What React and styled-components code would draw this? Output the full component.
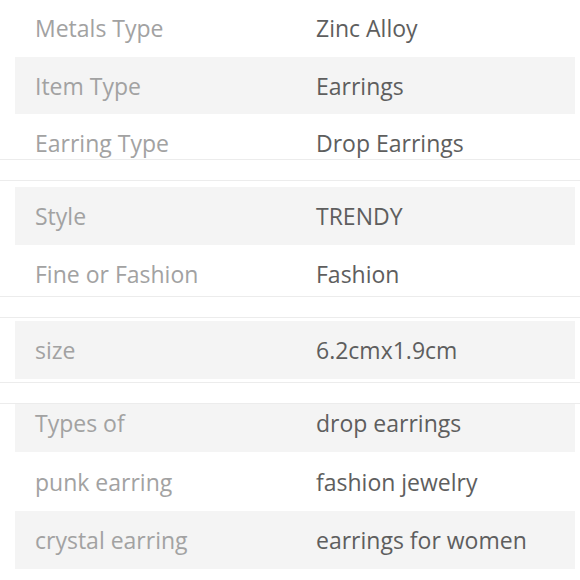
import React from 'react';
import styled, { createGlobalStyle } from 'styled-components';

const GlobalStyle = createGlobalStyle`
	html, body {
		margin: 0;
		padding: 0;
		background: #fff;
	}
	body {
		font-family: 'Open Sans', 'Noto Sans', sans-serif;
	}
`;

const sections = [
	{
		top: 0,
		bottom: 0,
		borderTop: false,
		rows: [
			{ label: 'Metals Type', value: 'Zinc Alloy', h: 57, clip: 'top' },
			{ label: 'Item Type', value: 'Earrings', h: 57, grey: true },
			{ label: 'Earring Type', value: 'Drop Earrings', h: 45, clip: 'bottom' },
		],
	},
	{
		top: 6,
		bottom: 0,
		borderTop: true,
		rows: [
			{ label: 'Style', value: 'TRENDY', h: 58, grey: true },
			{ label: 'Fine or Fashion', value: 'Fashion', h: 51, clip: 'bottom' },
		],
	},
	{
		top: 3,
		bottom: 3,
		borderTop: true,
		rows: [{ label: 'size', value: '6.2cmx1.9cm', h: 58, grey: true }],
	},
	{
		top: 0,
		bottom: 0,
		borderTop: true,
		last: true,
		rows: [
			{ label: 'Types of', value: 'drop earrings', h: 48, grey: true, clip: 'top' },
			{ label: 'punk earring', value: 'fashion jewelry', h: 59 },
			{ label: 'crystal earring', value: 'earrings for women', h: 58, grey: true },
		],
	},
];

function App() {
	return (
		<Page>
			<GlobalStyle />
			{sections.map((s, i) => (
				<Section key={i} $top={s.top} $bottom={s.bottom} $borderTop={s.borderTop} $last={s.last}>
					{s.rows.map((r) => (
						<Row key={r.label} $h={r.h} $grey={r.grey} $clip={r.clip}>
							<Label>{r.label}</Label>
							<Value>{r.value}</Value>
						</Row>
					))}
				</Section>
			))}
		</Page>
	);
}

const Page = styled.div`
	width: 580px;
	height: 580px;
	overflow: hidden;
	display: flex;
	flex-direction: column;
	gap: 20px;
`;

const Section = styled.div`
	display: flex;
	flex-direction: column;
	padding: ${(p) => p.$top}px 5px ${(p) => p.$bottom}px 15px;
	border-top: ${(p) => (p.$borderTop ? '1px solid #ececec' : 'none')};
	border-bottom: ${(p) => (p.$last ? 'none' : '1px solid #ececec')};
`;

const Row = styled.div`
	display: flex;
	flex-shrink: 0;
	height: ${(p) => p.$h}px;
	overflow: hidden;
	align-items: ${(p) => (p.$clip === 'top' ? 'flex-end' : p.$clip === 'bottom' ? 'flex-start' : 'center')};
	background: ${(p) => (p.$grey ? '#f4f4f4' : 'transparent')};
`;

const Cell = styled.div`
	flex-shrink: 0;
	box-sizing: border-box;
	height: 58px;
	padding-left: 20px;
	font-size: 23px;
	line-height: 58px;
	white-space: nowrap;
`;

const Label = styled(Cell)`
	width: 281px;
	color: #a2a2a2;
`;

const Value = styled(Cell)`
	flex: 1;
	color: #5e5e5e;
`;

export default App;
